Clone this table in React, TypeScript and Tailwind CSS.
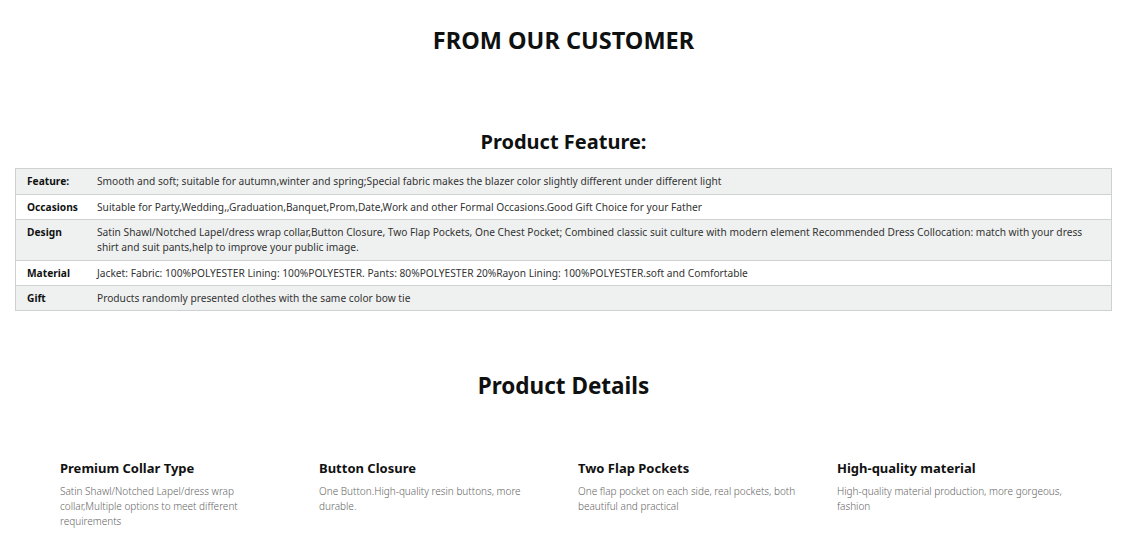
import React from "react";

const rows: { label: string; value: string; gray: boolean }[] = [
  {
    label: "Feature:",
    value:
      "Smooth and soft; suitable for autumn,winter and spring;Special fabric makes the blazer color slightly different under different light",
    gray: true,
  },
  {
    label: "Occasions",
    value:
      "Suitable for Party,Wedding,,Graduation,Banquet,Prom,Date,Work and other Formal Occasions.Good Gift Choice for your Father",
    gray: false,
  },
  {
    label: "Design",
    value:
      "Satin Shawl/Notched Lapel/dress wrap collar,Button Closure, Two Flap Pockets, One Chest Pocket; Combined classic suit culture with modern element Recommended Dress Collocation: match with your dress shirt and suit pants,help to improve your public image.",
    gray: true,
  },
  {
    label: "Material",
    value:
      "Jacket: Fabric: 100%POLYESTER Lining: 100%POLYESTER. Pants: 80%POLYESTER 20%Rayon Lining: 100%POLYESTER.soft and Comfortable",
    gray: false,
  },
  {
    label: "Gift",
    value: "Products randomly presented clothes with the same color bow tie",
    gray: true,
  },
];

const details = [
  {
    title: "Premium Collar Type",
    desc: "Satin Shawl/Notched Lapel/dress wrap collar,Multiple options to meet different requirements",
  },
  {
    title: "Button Closure",
    desc: "One Button.High-quality resin buttons, more durable.",
  },
  {
    title: "Two Flap Pockets",
    desc: "One flap pocket on each side, real pockets, both beautiful and practical",
  },
  {
    title: "High-quality material",
    desc: "High-quality material production, more gorgeous, fashion",
  },
];

export default function App() {
  return (
    <div
      className="w-[1127px] h-[549px] bg-white text-[#0f1111] overflow-hidden"
      style={{ fontFamily: '"Noto Sans", "Open Sans", Arial, sans-serif' }}
    >
      <h1 className="pt-[24px] text-center text-[23.5px] leading-[32px] font-bold">
        FROM OUR CUSTOMER
      </h1>
      <h2 className="mt-[71px] text-center text-[20px] leading-[30px] font-bold">
        Product Feature:
      </h2>
      <div className="mx-[15px] mt-[11px] border border-[#cdd1d1]">
        {rows.map((r, i) => (
          <div
            key={r.label}
            className={`flex px-[11px] text-[10.2px] leading-[15px] ${
              r.gray ? "bg-[#eff1f0]" : "bg-white"
            } ${i > 0 ? "border-t border-[#cdd1d1] pt-[5px] pb-[4px]" : "py-[5px]"} ${
              i === 2 ? "pb-[5px]" : ""
            }`}
          >
            <div className="w-[70px] shrink-0 font-bold">{r.label}</div>
            <div className="flex-1 pr-[8px] text-[#333]">{r.value}</div>
          </div>
        ))}
      </div>
      <h2 className="mt-[59px] text-center text-[22.5px] leading-[32px] font-bold">
        Product Details
      </h2>
      <div className="mt-[57px] pl-[60px] grid grid-cols-[259px_259px_259px_259px]">
        {details.map((d) => (
          <div key={d.title} className="w-[235px]">
            <div className="text-[13px] leading-[18px] font-bold text-[#111]">{d.title}</div>
            <div className="mt-[7px] text-[10px] leading-[15px] font-light text-[#666]">{d.desc}</div>
          </div>
        ))}
      </div>
    </div>
  );
}
